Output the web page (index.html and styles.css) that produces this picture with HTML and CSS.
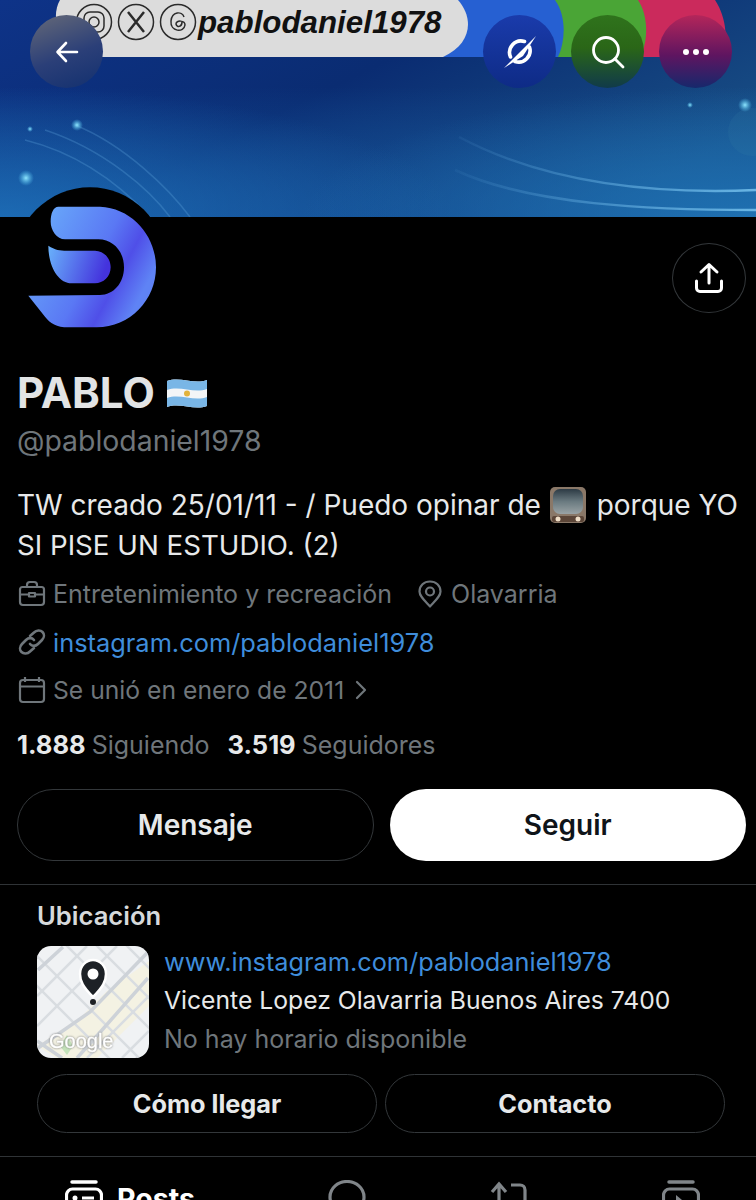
FILE: index.html
```html
<!DOCTYPE html>
<html lang="es">
<head>
<meta charset="utf-8">
<title>PABLO</title>
<link rel="stylesheet" href="styles.css">
</head>
<body>
<div class="page">
  <header class="banner">
    <svg class="banner-art" viewBox="0 0 756 217" width="756" height="217">
      <defs>
        <linearGradient id="sky" x1="0" y1="0" x2="1" y2="0.6">
          <stop offset="0" stop-color="#0e3388"/>
          <stop offset="0.5" stop-color="#0a2c72"/>
          <stop offset="1" stop-color="#184f85"/>
        </linearGradient>
        <linearGradient id="floor" x1="0" y1="0" x2="0" y2="1">
          <stop offset="0.4" stop-color="#1a6ab5" stop-opacity="0"/>
          <stop offset="1" stop-color="#15549f" stop-opacity="0.6"/>
        </linearGradient>
        <radialGradient id="cornerL" cx="0" cy="1" r="0.6"><stop offset="0" stop-color="#1f74bd" stop-opacity="0.8"/><stop offset="1" stop-color="#1f74bd" stop-opacity="0"/></radialGradient>
        <radialGradient id="cornerR" cx="1" cy="1" r="0.6"><stop offset="0" stop-color="#2178b8" stop-opacity="0.8"/><stop offset="1" stop-color="#2178b8" stop-opacity="0"/></radialGradient>
        <linearGradient id="swoosh" gradientUnits="userSpaceOnUse" x1="450" y1="0" x2="756" y2="0"><stop offset="0" stop-color="#6fb7ea" stop-opacity="0.05"/><stop offset="1" stop-color="#7cc8f2" stop-opacity="0.8"/></linearGradient>
        <radialGradient id="glow"><stop offset="0" stop-color="#8fe6ff"/><stop offset="1" stop-color="#4fc0ee" stop-opacity="0"/></radialGradient>
      </defs>
      <rect width="756" height="217" fill="url(#sky)"/>
      <rect width="756" height="217" fill="url(#floor)"/>
      <rect width="756" height="217" fill="url(#cornerL)"/>
      <rect width="756" height="217" fill="url(#cornerR)"/>
      <path d="M630 0H715C727 18 728 42 722 57H620Z" fill="#cb2a5c"/>
      <path d="M545 0H638C648 15 649 40 640 57H540Z" fill="#4aa536"/>
      <path d="M440 0H555C566 15 566 40 558 57H430Z" fill="#2660d2"/>
      <path d="M60 0H458C474 18 472 44 443 57H100C70 57 46 25 60 0Z" fill="#dcdcdc"/>
      <g fill="none" stroke="#2b2b2b" stroke-width="1.5">
        <circle cx="94" cy="22" r="17.500"/><rect x="84" y="12" width="20" height="20" rx="6"/><circle cx="94" cy="22" r="5"/>
        <circle cx="136" cy="22" r="17.500"/><path d="M128 12L144 32M144 12L128 32" stroke-width="2.500"/>
        <circle cx="178" cy="22" r="17.500"/><path d="M184 17C182 11 172 11 171 21C170 32 184 33 185 25C185 20 176 20 176 24C177 28 182 27 182 22"/>
      </g>
      <text class="pill-handle" x="198" y="33">pablodaniel1978</text>
      <g fill="none" stroke="url(#swoosh)" stroke-width="2.500">
        <path d="M459 137C540 180 640 195 756 190"/>
        <path d="M455 170C530 205 650 210 756 210"/>
      </g>
      <g fill="none" stroke="#6fb7ea" stroke-opacity="0.25" stroke-width="1.500">
        <path d="M75 125C125 145 170 190 190 217"/>
        <path d="M45 130C105 150 150 190 170 217"/>
        <path d="M25 140C85 155 125 190 150 217"/>
      </g>
      <circle cx="752" cy="132" r="24" fill="#3e8fb0" fill-opacity="0.12"/>
      <circle cx="745" cy="105" r="7" fill="url(#glow)"/>
      <circle cx="690" cy="105" r="3" fill="url(#glow)"/>
      <circle cx="77" cy="125" r="6" fill="url(#glow)"/>
      <circle cx="26" cy="178" r="8" fill="url(#glow)"/>
      <circle cx="30" cy="129" r="3" fill="url(#glow)"/>
    </svg>
    <button class="round round-back" aria-label="Atrás">
      <svg viewBox="0 0 28 28" width="28" height="28"><path d="M24 14H5M13 5L4.500 14L13 23" fill="none" stroke="#fff" stroke-width="2.600" stroke-linecap="round" stroke-linejoin="round"/></svg>
    </button>
    <div class="nav-right">
      <button class="round round-blue" aria-label="Grok">
        <svg viewBox="0 0 36 36" width="36" height="36"><path d="M8.500 23A11.500 11.500 0 0 1 22.500 7.500M27.500 13A11.500 11.500 0 0 1 13 27.500" fill="none" stroke="#fff" stroke-width="3.600" stroke-linecap="round"/><path d="M2 34L34 2L21 22Z" fill="#fff"/></svg>
      </button>
      <button class="round round-green" aria-label="Buscar">
        <svg viewBox="0 0 36 36" width="36" height="36"><circle cx="16" cy="16" r="12.500" fill="none" stroke="#fff" stroke-width="2.800"/><path d="M25 25L33 33" stroke="#fff" stroke-width="2.800" stroke-linecap="round"/></svg>
      </button>
      <button class="round round-pink" aria-label="Más">
        <svg viewBox="0 0 28 8" width="28" height="8"><circle cx="4" cy="4" r="3" fill="#fff"/><circle cx="14" cy="4" r="3" fill="#fff"/><circle cx="24" cy="4" r="3" fill="#fff"/></svg>
      </button>
    </div>
  </header>

  <div class="head-row">
    <svg class="avatar" viewBox="0 0 660 480" width="220" height="160">
      <defs>
        <linearGradient id="logoA" x1="0" y1="0" x2="1" y2="0.5"><stop offset="0" stop-color="#6cb4fb"/><stop offset="0.6" stop-color="#5a78f4"/><stop offset="0.8" stop-color="#4f4fe8"/><stop offset="1" stop-color="#5f83f5"/></linearGradient>
        <linearGradient id="logoB" x1="0" y1="0" x2="1" y2="0.2"><stop offset="0" stop-color="#69b2fb"/><stop offset="1" stop-color="#4433dd"/></linearGradient>
      </defs>
      <circle cx="270" cy="250" r="228" fill="#000"/>
      <path d="M175 80L300 80C400 85 468 170 468 262C468 360 390 442 290 442L205 442C170 442 150 430 135 410L85 347L300 345C340 345 372 310 372 262C372 215 340 178 295 178L195 178C170 178 152 150 152 125C152 100 160 80 175 80Z" fill="url(#logoA)"/>
      <path d="M145 197C165 210 180 212 200 212L285 212C312 212 332 235 332 262C332 290 310 310 285 310L215 310C175 310 145 260 145 197Z" fill="url(#logoB)"/>
    </svg>
    <button class="share" aria-label="Compartir">
      <svg viewBox="0 0 30 32" width="30" height="32"><path d="M15 21V3M7 10L15 2.500L23 10M2.500 19V26C2.500 28 4 29.500 6 29.500H24C26 29.500 27.500 28 27.500 26V19" fill="none" stroke="#fff" stroke-width="3" stroke-linecap="round" stroke-linejoin="round"/></svg>
    </button>
  </div>

  <section class="profile">
    <h1 class="name">PABLO
      <svg class="flag" viewBox="0 0 40 30" width="40" height="30"><path d="M0 3C13 -2 27 7 40 2V28C27 33 13 24 0 29Z" fill="#f3f5f7"/><path d="M0 3C13 -2 27 7 40 2V11C27 16 13 7 0 12Z" fill="#79b6e6"/><path d="M0 20C13 15 27 24 40 19V28C27 33 13 24 0 29Z" fill="#79b6e6"/><circle cx="20" cy="15.500" r="3" fill="#e2b33d"/></svg>
    </h1>
    <div class="handle">@pablodaniel1978</div>
    <p class="bio">TW creado 25/01/11 - / Puedo opinar de
      <svg class="tv" viewBox="0 0 38 38" width="38" height="38">
        <defs><linearGradient id="screen" x1="0" y1="0" x2="0" y2="1"><stop offset="0" stop-color="#2c3a44"/><stop offset="0.5" stop-color="#6a7a80"/><stop offset="1" stop-color="#9aa3a5"/></linearGradient></defs>
        <rect x="1" y="1" width="36" height="36" rx="5" fill="#8a7868"/>
        <rect x="4" y="3" width="30" height="25" rx="7" fill="url(#screen)"/>
        <rect x="3" y="30" width="32" height="6" rx="2" fill="#5c4638"/>
        <circle cx="9" cy="33" r="2.500" fill="#f0dfc8"/><circle cx="29" cy="33" r="2.500" fill="#f0dfc8"/>
      </svg>
      porque YO<br><span class="bio-second">SI PISE UN ESTUDIO. (2)</span></p>
    <div class="meta-row">
      <span class="meta-item">
        <svg class="meta-icon" viewBox="0 0 28 28" width="28" height="28"><path d="M9 7V5C9 3 10 2 12 2H16C18 2 19 3 19 5V7M4.500 7H23.500C25 7 26 8 26 9.500V22C26 24 25 25 23 25H5C3 25 2 24 2 22V9.500C2 8 3 7 4.500 7ZM2 14.500H11M17 14.500H26M11 13H17V16.500H11Z" fill="none" stroke="#6f767b" stroke-width="2.200" stroke-linejoin="round"/></svg>
        Entretenimiento y recreación
      </span>
      <span class="meta-item meta-place">
        <svg class="meta-icon" viewBox="0 0 28 28" width="28" height="28"><path d="M14 26.500C8 20 3.500 16 3.500 11.500C3.500 5.500 8 1.500 14 1.500C20 1.500 24.500 5.500 24.500 11.500C24.500 16 20 20 14 26.500Z" fill="none" stroke="#6f767b" stroke-width="2.200" stroke-linejoin="round"/><circle cx="14" cy="11.500" r="4" fill="none" stroke="#6f767b" stroke-width="2.200"/></svg>
        Olavarria
      </span>
    </div>
    <div class="meta-row">
      <a class="meta-item meta-link">
        <svg class="meta-icon" viewBox="0 0 28 28" width="28" height="28"><path d="M12 8L16 4.500C18.500 2 22.500 2 24.500 4C26.500 6 26.500 9.500 24 12L20 16C17.500 18.500 14 18.500 12 16M16 20L12 23.500C9.500 26 5.500 26 3.500 24C1.500 22 1.500 18.500 4 16L8 12C10.500 9.500 14 9.500 16 12" fill="none" stroke="#6f767b" stroke-width="2.600" stroke-linecap="round"/></svg>
        instagram.com/pablodaniel1978
      </a>
    </div>
    <div class="meta-row">
      <span class="meta-item meta-date">
        <svg class="meta-icon" viewBox="0 0 28 28" width="28" height="28"><path d="M7 1V6M21 1V6M5 4H23C25 4 26 5 26 7V23C26 25 25 26 23 26H5C3 26 2 25 2 23V7C2 5 3 4 5 4ZM2 10.500H26" fill="none" stroke="#6f767b" stroke-width="2.200"/></svg>
        Se unió en enero de 2011
        <svg class="chev" viewBox="0 0 14 20" width="14" height="20"><path d="M3 2L11 10L3 18" fill="none" stroke="#6f767b" stroke-width="2.200" stroke-linecap="round" stroke-linejoin="round"/></svg>
      </span>
    </div>
    <div class="stats">
      <span><b>1.888</b> Siguiendo</span>
      <span><b>3.519</b> Seguidores</span>
    </div>
    <div class="actions">
      <button class="btn btn-outline">Mensaje</button>
      <button class="btn btn-solid">Seguir</button>
    </div>
  </section>

  <section class="location">
    <h2 class="loc-title">Ubicación</h2>
    <div class="loc-body">
      <svg class="map" viewBox="0 0 112 112" width="112" height="112">
        <rect width="112" height="112" fill="#f0f2f4"/>
        <path d="M0 100L45 70L70 45L112 15V60L60 112H20Z" fill="#f5f1de" opacity="0.8"/>
        <g stroke="#d9dde1" stroke-width="2.500" fill="none">
          <path d="M-10 30L90 130M-10 0L120 130M20 -10L130 100M50 -10L130 70M80 -10L130 40"/>
          <path d="M0 50L50 0M0 80L80 0M50 112L112 50M85 112L112 85"/>
        </g>
        <g stroke="#cdd2d8" stroke-width="3.500" fill="none">
          <path d="M1 24L26 1M1 102L53 66L111 6M40 112L58 92L111 32"/>
          <path d="M0 95L25 112"/>
        </g>
        <path d="M23 100L30 89L36 100L30 109Z" fill="#c4e3ba"/>
        <path d="M56 58C46 48 43 42 43 35C43 27 49 21 56 21C63 21 69 27 69 35C69 42 66 48 56 58Z" transform="translate(0 -7)" fill="#1d2126" stroke="#fff" stroke-width="2.500"/>
        <circle cx="56" cy="28" r="5.500" fill="#fff"/>
        <circle cx="56" cy="56" r="3" fill="#1d2126"/>
        <text class="map-logo" x="12" y="102">Google</text>
      </svg>
      <div class="loc-text">
        <a class="loc-link">www.instagram.com/pablodaniel1978</a>
        <div class="loc-addr">Vicente Lopez Olavarria Buenos Aires 7400</div>
        <div class="loc-hours">No hay horario disponible</div>
      </div>
    </div>
    <div class="loc-actions">
      <button class="btn-small">Cómo llegar</button>
      <button class="btn-small">Contacto</button>
    </div>
  </section>

  <nav class="tabs">
    <div class="tab tab-active">
      <svg viewBox="0 0 38 38" width="38" height="38"><path d="M7 2H31" stroke="#fff" stroke-width="3.500" stroke-linecap="round"/><rect x="1.500" y="9" width="35" height="28" rx="6" fill="none" stroke="#fff" stroke-width="3.200"/><circle cx="10" cy="18" r="2.500" fill="#fff"/><path d="M17 18H29M9 27H29" stroke="#fff" stroke-width="3.200"/></svg>
      <span>Posts</span>
    </div>
    <div class="tab">
      <svg viewBox="0 0 38 38" width="38" height="38"><path d="M19 1.500C28 1.500 36 8 36 17C36 26 28 34 19 34C10 34 2 26 2 17C2 8 10 1.500 19 1.500Z" fill="none" stroke="#808589" stroke-width="3.200"/></svg>
    </div>
    <div class="tab">
      <svg viewBox="0 0 38 38" width="38" height="38"><path d="M9 6V36M2 12L9 4L16 12M21 5H30C33 5 35 7 35 10V36" fill="none" stroke="#808589" stroke-width="3.200"/></svg>
    </div>
    <div class="tab">
      <svg viewBox="0 0 38 38" width="38" height="38"><path d="M7 2H31" stroke="#808589" stroke-width="3.500" stroke-linecap="round"/><rect x="1.500" y="9" width="35" height="28" rx="6" fill="none" stroke="#808589" stroke-width="3.200"/><path d="M14 15L26 25L14 35Z" fill="#808589"/></svg>
    </div>
  </nav>
</div>
</body>
</html>
```

FILE: styles.css
```css
* { box-sizing: border-box; }
html, body { margin: 0; padding: 0; background: #000; }
body { font-family: Inter, "Liberation Sans", sans-serif; color: #e7e9ea; }
.page { width: 756px; height: 1200px; overflow: hidden; background: #000; }

button { font-family: inherit; cursor: pointer; padding: 0; }

.banner { position: relative; height: 217px; }
.banner-art { display: block; }
.pill-handle { font-family: "Liberation Sans", sans-serif; font-weight: 700; font-style: italic; font-size: 31.300px; fill: #111; }

.round { position: absolute; top: 15px; width: 73px; height: 73px; border: 0; border-radius: 50%; display: flex; align-items: center; justify-content: center; }
.round-back { left: 30px; background: linear-gradient(160deg, #666a78 0%, #2b3f78 55%, #12306f 100%); }
.nav-right { position: absolute; top: 15px; left: 483px; display: flex; gap: 15px; }
.nav-right .round { position: static; }
.round-blue { background: linear-gradient(180deg, #1a3bab 0%, #0e2b86 100%); }
.round-green { background: linear-gradient(180deg, #2f731c 0%, #2a6617 45%, #103a4a 100%); }
.round-pink { background: linear-gradient(180deg, #b4265a 0%, #5f1560 55%, #16286c 100%); }

.head-row { display: flex; justify-content: space-between; align-items: flex-start; height: 123px; padding-right: 10px; }
.avatar { display: block; margin-top: -37px; position: relative; }
.share { width: 74px; height: 70px; margin-top: 26px; border-radius: 50%; background: #000; border: 1px solid #33373a; display: flex; align-items: center; justify-content: center; }

.profile { padding: 0 10px 0 17px; }
.name { margin: 0; font-size: 42px; line-height: 46px; font-weight: 700; color: #e2e4e5; display: flex; align-items: center; gap: 12px; padding-top: 30px; }
.flag { display: block; }
.handle { font-size: 28.400px; line-height: 40px; color: #6f767b; margin-top: 5px; }
.bio { margin: 24px 0 0; font-size: 28px; line-height: 40px; color: #e7e9ea; white-space: nowrap; }
.bio-second { font-size: 27.700px; }
.tv { vertical-align: -9px; margin: 0 2px 0 0; }

.meta-row { display: flex; height: 48px; align-items: center; font-size: 25px; color: #6f767b; }
.bio + .meta-row { margin-top: 5px; }
.meta-item { display: flex; align-items: center; gap: 6px; }
.meta-place { margin-left: 23px; }
.meta-link { color: #3f8ddb; font-size: 25.400px; }
.meta-date { font-size: 24.700px; }
.meta-icon { display: block; flex: none; width: 30px; }
.chev { margin-left: 4px; }

.stats { display: flex; gap: 18px; font-size: 25px; word-spacing: -1px; color: #6f767b; margin-top: 11px; line-height: 40px; }
.stats b { color: #e7e9ea; font-weight: 700; font-size: 25.500px; }

.actions { display: grid; grid-template-columns: 1fr 1fr; gap: 16px; margin-top: 24px; }
.btn { height: 72px; border-radius: 36px; font-size: 28px; font-weight: 600; }
.btn-outline { background: #000; border: 1px solid #33373a; color: #e7e9ea; }
.btn-solid { background: #fff; border: 0; color: #0f1419; }

.location { margin-top: 23px; border-top: 1px solid #2f3336; border-bottom: 1px solid #2f3336; padding: 15px 31px 23px 37px; }
.loc-title { margin: 0; font-size: 25.600px; line-height: 32px; font-weight: 600; color: #d6d9db; }
.loc-body { display: flex; gap: 15px; margin-top: 14px; }
.map { display: block; border-radius: 14px; flex: none; }
.map-logo { font-family: "Liberation Sans", sans-serif; font-size: 20px; font-weight: 400; fill: #fff; stroke: #fff; stroke-width: 0.300px; filter: drop-shadow(0 0 1px #777); }
.loc-text { font-size: 25px; line-height: 39px; margin-top: -4px; }
.loc-link { display: block; color: #3f8ddb; font-size: 25.300px; }
.loc-addr { color: #e7e9ea; font-size: 24.700px; }
.loc-hours { color: #6f767b; }
.loc-actions { display: flex; gap: 8px; margin-top: 15px; }
.btn-small { flex: 1; height: 59px; border-radius: 30px; background: #000; border: 1px solid #33373a; color: #e7e9ea; font-size: 25.300px; font-weight: 700; }

.tabs { display: grid; grid-template-columns: 263px 162px 172px auto; padding: 23px 0 0 65px; }
.tab { display: flex; gap: 14px; color: #fff; font-size: 28.600px; font-weight: 700; line-height: 38px; }
.tab svg { display: block; flex: none; }
```
